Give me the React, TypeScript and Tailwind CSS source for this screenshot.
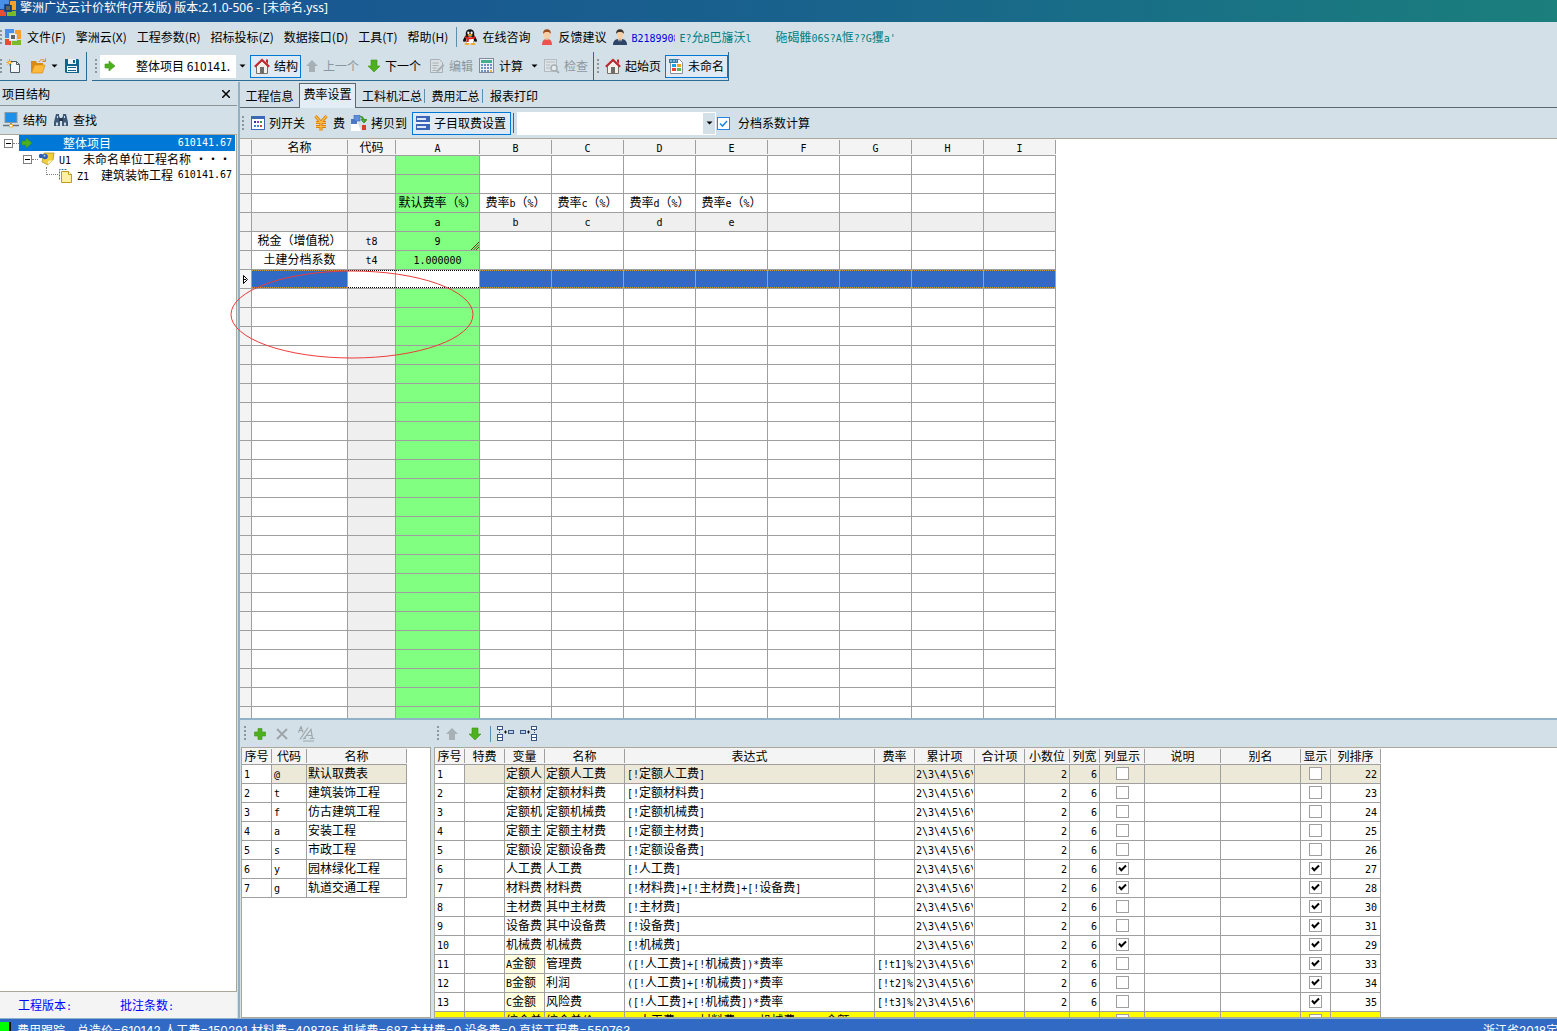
import React from 'react';

const GRID_FONT = "font-['Noto_Sans_CJK_SC',sans-serif]";

interface IRateRow {
  name?: string;
  code?: string;
  cells?: string[];
  kind?: 'keys' | 'selected';
}

interface IFeeRow {
  variable: string;
  name: string;
  expr: string;
  rate?: string;
  colShow?: boolean;
  show?: boolean;
  order: number;
  kind?: 'current' | 'amount' | 'total';
}

const menus = ['文件(F)', '擎洲云(X)', '工程参数(R)', '招标投标(Z)', '数据接口(D)', '工具(T)', '帮助(H)'];

const rateColumns = ['A', 'B', 'C', 'D', 'E', 'F', 'G', 'H', 'I'];

const rateRows: IRateRow[] = [
  {},
  {},
  { cells: ['默认费率（%）', '费率b（%）', '费率c（%）', '费率d（%）', '费率e（%）'] },
  { cells: ['a', 'b', 'c', 'd', 'e'], kind: 'keys' },
  { name: '税金（增值税）', code: 't8', cells: ['9'] },
  { name: '土建分档系数', code: 't4', cells: ['1.000000'] },
  { kind: 'selected' },
  ...Array.from({ length: 24 }, () => ({})),
];

const feeTables = [
  { code: '@', name: '默认取费表' },
  { code: 't', name: '建筑装饰工程' },
  { code: 'f', name: '仿古建筑工程' },
  { code: 'a', name: '安装工程' },
  { code: 's', name: '市政工程' },
  { code: 'y', name: '园林绿化工程' },
  { code: 'g', name: '轨道交通工程' },
];

const feeHeaders = [
  ['序号', 'w-[30px]'],
  ['特费', 'w-[40px]'],
  ['变量', 'w-[40px]'],
  ['名称', 'w-[80px]'],
  ['表达式', 'w-[250px]'],
  ['费率', 'w-[40px]'],
  ['累计项', 'w-[60px]'],
  ['合计项', 'w-[50px]'],
  ['小数位', 'w-[45px]'],
  ['列宽', 'w-[30px]'],
  ['列显示', 'w-[45px]'],
  ['说明', 'w-[76px]'],
  ['别名', 'w-[80px]'],
  ['显示', 'w-[30px]'],
  ['列排序', 'w-[50px]'],
];

const feeRows: IFeeRow[] = [
  { variable: '定额人工费', name: '定额人工费', expr: '[!定额人工费]', order: 22, kind: 'current' },
  { variable: '定额材料费', name: '定额材料费', expr: '[!定额材料费]', order: 23 },
  { variable: '定额机械费', name: '定额机械费', expr: '[!定额机械费]', order: 24 },
  { variable: '定额主材费', name: '定额主材费', expr: '[!定额主材费]', order: 25 },
  { variable: '定额设备费', name: '定额设备费', expr: '[!定额设备费]', order: 26 },
  { variable: '人工费', name: '人工费', expr: '[!人工费]', colShow: true, show: true, order: 27 },
  { variable: '材料费', name: '材料费', expr: '[!材料费]+[!主材费]+[!设备费]', colShow: true, show: true, order: 28 },
  { variable: '主材费', name: '其中主材费', expr: '[!主材费]', show: true, order: 30 },
  { variable: '设备费', name: '其中设备费', expr: '[!设备费]', show: true, order: 31 },
  { variable: '机械费', name: '机械费', expr: '[!机械费]', colShow: true, show: true, order: 29 },
  { variable: 'A金额', name: '管理费', expr: '([!人工费]+[!机械费])*费率', rate: '[!t1]%', show: true, order: 33, kind: 'amount' },
  { variable: 'B金额', name: '利润', expr: '([!人工费]+[!机械费])*费率', rate: '[!t2]%', show: true, order: 34, kind: 'amount' },
  { variable: 'C金额', name: '风险费', expr: '([!人工费]+[!机械费])*费率', rate: '[!t3]%', show: true, order: 35, kind: 'amount' },
  { variable: '综合单价', name: '综合单价', expr: '[!人工费]+[!材料费]+[!机械费]+[!A金额]+[!B金额]', show: true, order: 36, kind: 'total' },
];

// Latin runs are set in a half-width mono face so that they line up with the full-width glyphs
const Mixed = ({ children }: { children: string }) => (
  <>
    {children.split(/([\x20-\x7e]+)/).map((part, i) =>
      i % 2 === 1 ? (
        <span key={i} className="font-['DejaVu_Sans_Mono',monospace] text-[10px] leading-none whitespace-pre">{part}</span>
      ) : (
        part
      )
    )}
  </>
);

const Grip = () => (
  <svg width="3" height="15" viewBox="0 0 3 15" className="shrink-0">
    {[0, 4, 8, 12].map((y) => (
      <rect key={y} x="0" y={y} width="2" height="2" fill="#8c979d" />
    ))}
  </svg>
);

const Caret = () => (
  <svg width="7" height="4" viewBox="0 0 7 4" className="shrink-0">
    <path d="M0.5 0.5h6L3.5 3.5z" fill="#000" />
  </svg>
);

const LogoIcon = ({ dark }: { dark?: boolean }) => (
  <svg width="16" height="16" viewBox="0 0 16 16" className="shrink-0">
    <path d="M0 0h9v4H4v5H0z" fill="#4a90e8" />
    <path d="M10 1h6v9h-4V5h-2z" fill="#f9a02c" />
    <path d="M7 12h5v-1h4v5H7z" fill="#7db928" />
    <path d="M0 10h4v2h2v4H0z" fill="#ea4b35" />
    <rect x="5" y="5" width="6" height="6" fill={dark ? '#123c6e' : '#f4f4f4'} />
    <rect x="6" y="6" width="4" height="4" fill="#5d6468" />
  </svg>
);

const ArrowRight = () => (
  <svg width="12" height="12" viewBox="0 0 12 12" className="shrink-0">
    <path d="M1 4h4V1l6 5-6 5V8H1z" fill="#4fb01f" stroke="#3d9614" strokeWidth="0.6" />
  </svg>
);

const ArrowUp = () => (
  <svg width="14" height="14" viewBox="0 0 14 14" className="shrink-0">
    <path d="M7 1l6 6h-3v6H4V7H1z" fill="#a7b0b4" />
  </svg>
);

const ArrowDown = () => (
  <svg width="14" height="14" viewBox="0 0 14 14" className="shrink-0">
    <path d="M7 13L1 7h3V1h6v6h3z" fill="#4fb01f" stroke="#3d9614" strokeWidth="0.6" />
  </svg>
);

const HouseIcon = () => (
  <svg width="16" height="16" viewBox="0 0 16 16" className="shrink-0">
    <path d="M2.500 8v7.500h11V8L8 3z" fill="#f3f0ea" stroke="#77706a" />
    <rect x="6" y="9" width="4" height="6.500" fill="#6d6d6d" />
    <path d="M.8 8.800L8 1.800l7.200 7" fill="none" stroke="#c8262c" strokeWidth="2" />
    <path d="M12 1.500h2V6l-2-2z" fill="#c8262c" />
  </svg>
);

const QqIcon = () => (
  <svg width="16" height="16" viewBox="0 0 16 16" className="shrink-0">
    <ellipse cx="8" cy="9.500" rx="5.600" ry="5" fill="#111" />
    <path d="M1 12c0-2 1.500-3.500 2-4l2 3-3 2zM15 12c0-2-1.500-3.500-2-4l-2 3 3 2z" fill="#111" />
    <ellipse cx="8" cy="4.800" rx="4.300" ry="4.600" fill="#111" />
    <ellipse cx="8" cy="11.200" rx="3.800" ry="3.600" fill="#fff" />
    <ellipse cx="6.400" cy="3.800" rx="1.100" ry="1.400" fill="#fff" />
    <ellipse cx="9.600" cy="3.800" rx="1.100" ry="1.400" fill="#fff" />
    <ellipse cx="8" cy="6" rx="2.600" ry="0.900" fill="#f7a519" />
    <path d="M3 7c3 1.800 7 1.800 10 0l.4 2.200c-2 1-4.500 1.300-6.400 1l-.4 2.800H4.400l.2-3.600-2-.8z" fill="#e3211c" />
    <ellipse cx="5" cy="15" rx="2.600" ry="1" fill="#f7a519" />
    <ellipse cx="11" cy="15" rx="2.600" ry="1" fill="#f7a519" />
  </svg>
);

const PersonIcon = ({ suit }: { suit?: boolean }) => (
  <svg width="14" height="16" viewBox="0 0 14 16" className="shrink-0">
    <path d={suit ? 'M0 16c0-4 2-5.500 5-6h4c3 .5 5 2 5 6z' : 'M2 16c0-4 1.500-5.500 4-6h2c2.500.5 4 2 4 6z'} fill={suit ? '#2d4468' : '#ef5350'} />
    {suit && <path d="M5 10l2 5.500L9 10z" fill="#fff" />}
    {suit && <path d="M6.500 11h1l.5 3-1 1.500-1-1.500z" fill="#1c2c46" />}
    <rect x="5.500" y="7" width="3" height="4" fill="#e8b48c" />
    <ellipse cx="7" cy="5.500" rx={suit ? 3 : 3.6} ry="4" fill="#f7cfa6" />
    <path d="M3.200 5C2.800 1.500 5 .3 7 .3S11.200 1.500 10.800 5C10 3.500 9 3 7 3S4 3.500 3.200 5z" fill={suit ? '#3b3530' : '#9a4f1e'} />
  </svg>
);

const NewIcon = () => (
  <svg width="16" height="16" viewBox="0 0 16 16" className="shrink-0">
    <path d="M4.500 3.500h6l3 3v8h-9z" fill="#f2f6f8" stroke="#4d5b63" />
    <path d="M10.500 3.500v3h3" fill="none" stroke="#4d5b63" />
    <path d="M3.500 1v7M.5 4.500h6M1.500 2.500l4 4M5.500 2.500l-4 4" stroke="#f09a1c" />
    <circle cx="3.500" cy="4.500" r="1" fill="#fff3c4" />
  </svg>
);

const OpenIcon = () => (
  <svg width="17" height="16" viewBox="0 0 17 16" className="shrink-0">
    <path d="M1 3h5l1 2h6v3H5l-3 6H1z" fill="#d98a12" />
    <path d="M4.500 7H15l-2.500 8H1.500z" fill="#fdb93a" stroke="#d98a12" strokeWidth="0.700" />
    <path d="M9 4c1-2.500 3.500-3 5.500-1.500M15.500 .5v3h-3" fill="none" stroke="#d98a12" />
  </svg>
);

const SaveIcon = () => (
  <svg width="16" height="16" viewBox="0 0 16 16" className="shrink-0">
    <path d="M1 1h13l1 1v13H2l-1-1z" fill="#10658f" />
    <rect x="4" y="1" width="8" height="5" fill="#e9f3f8" />
    <rect x="9" y="2" width="2" height="3" fill="#10658f" />
    <rect x="3" y="8" width="10" height="6" fill="#f4f8fa" />
    <path d="M4 9.500h8M4 12.500h8" stroke="#10658f" />
  </svg>
);

const EditIcon = () => (
  <svg width="16" height="16" viewBox="0 0 16 16" className="shrink-0">
    <path d="M1.500 1.500h9l3 3v10h-12z" fill="#d9dfe2" stroke="#a7b0b4" />
    <path d="M3.500 5h6M3.500 7.500h6M3.500 10h4M3.500 12.500h4" stroke="#a7b0b4" />
    <path d="M8 12l6-6 1.500 1.500-6 6L7.500 14z" fill="#a7b0b4" />
  </svg>
);

const CalcIcon = () => (
  <svg width="16" height="16" viewBox="0 0 16 16" className="shrink-0">
    <rect x="0.500" y="0.500" width="14" height="14" fill="#eef2f6" stroke="#83899a" />
    <rect x="2" y="2" width="11" height="3" fill="#46ac8d" />
    {[6, 9, 12].map((y) =>
      [2, 5, 8, 11].map((x) => (
        <rect key={`${x}-${y}`} x={x} y={y} width="2" height="2" fill={x === 11 && y === 12 ? '#f3b73b' : '#6f8fc9'} />
      ))
    )}
  </svg>
);

const CheckDocIcon = () => (
  <svg width="16" height="16" viewBox="0 0 16 16" className="shrink-0">
    <rect x="0.500" y="1.500" width="12" height="12" fill="#dde3e6" stroke="#b3bcc1" />
    <path d="M2 4h9M2 7h4M2 10h4" stroke="#b3bcc1" />
    <circle cx="10" cy="10" r="3" fill="#e6ebed" stroke="#a7b0b4" strokeWidth="1.500" />
    <path d="M12 12l3 3" stroke="#a7b0b4" strokeWidth="2" />
  </svg>
);

const SheetIcon = () => (
  <svg width="15" height="16" viewBox="0 0 15 16" className="shrink-0">
    <path d="M1.500 1.500h9l3 3v11h-12z" fill="#fff" stroke="#8a9096" />
    <rect x="0" y="1" width="9" height="4" fill="#2f7fa8" />
    <path d="M1 3h7" stroke="#d5e8f0" strokeDasharray="2 1" />
    <rect x="3" y="6" width="4" height="3" fill="#1aa3dc" />
    <rect x="8" y="6" width="4" height="3" fill="#f7a519" />
    <rect x="3" y="10" width="4" height="3" fill="#e9443a" />
    <rect x="8" y="10" width="4" height="3" fill="#58b947" />
  </svg>
);

const MonitorIcon = () => (
  <svg width="16" height="16" viewBox="0 0 16 16" className="shrink-0">
    <rect x="2" y="0.500" width="12" height="10" fill="#1c8fe8" stroke="#8d979e" />
    <path d="M8 11v2M0 13.500h16" stroke="#6a737a" strokeWidth="1.500" />
    <rect x="6" y="12" width="4" height="3.500" fill="#f3b73b" />
    <rect x="7" y="13" width="2" height="1.500" fill="#fff" />
  </svg>
);

const BinocularsIcon = () => (
  <svg width="16" height="15" viewBox="0 0 16 15" className="shrink-0">
    <path d="M3 1h3v2l1 2v8H1V9zM10 1h3l2 8v4H9V5l1-2z" fill="#3e5878" />
    <rect x="6" y="5" width="4" height="3" fill="#26384e" />
    <path d="M3 9.500h2v3H3zM11 9.500h2v3h-2zM4 3h1v2H4zM11 3h1v2h-1z" fill="#c9d9ea" />
  </svg>
);

const ColumnsIcon = () => (
  <svg width="14" height="14" viewBox="0 0 14 14" className="shrink-0">
    <rect x="0.500" y="0.500" width="13" height="13" fill="#fff" stroke="#3d68b8" />
    <path d="M0 1.500h14" stroke="#3d68b8" strokeWidth="3" />
    <rect x="3" y="5" width="2" height="2" fill="#3a2a9c" />
    <rect x="6" y="5" width="2" height="2" fill="#a02ac8" />
    <rect x="9" y="5" width="2" height="2" fill="#2e9e3a" />
    <rect x="3" y="9" width="2" height="2" fill="#2b8ce0" />
    <rect x="6" y="9" width="2" height="2" fill="#2b8ce0" />
    <rect x="9" y="9" width="2" height="2" fill="#e03b2b" />
  </svg>
);

const YuanIcon = () => (
  <svg width="16" height="16" viewBox="0 0 16 16" className="shrink-0">
    <path d="M2.500 1L8 7.500 13.500 1M8 7v8.500M3 7.500h10M3 11.500h10" fill="none" stroke="#d9820e" strokeWidth="3.200" />
    <path d="M2.500 1L8 7.500 13.500 1M8 7v8.500M3 7.500h10M3 11.500h10" fill="none" stroke="#fbbf4a" strokeWidth="1.200" />
  </svg>
);

const CopyToIcon = () => (
  <svg width="16" height="16" viewBox="0 0 16 16" className="shrink-0">
    <path d="M0 6h6l4 10H0z" fill="#fff" />
    <rect x="0" y="4" width="6" height="5" fill="#4b79c4" />
    <rect x="3" y="0" width="6" height="6" fill="#5f8fdc" stroke="#3d68b8" strokeWidth="0.600" />
    <path d="M9 1.500c3 0 4 1 4 5M10 4.500l3 3.500 3-3.500z" fill="#3f9a2a" stroke="#3f9a2a" />
    <rect x="11" y="10" width="4" height="5" fill="#d6402b" />
  </svg>
);

const ServerIcon = () => (
  <svg width="14" height="15" viewBox="0 0 14 15" className="shrink-0">
    <rect x="0" y="0" width="14" height="6" fill="#3a66b5" />
    <rect x="0" y="8" width="14" height="6" fill="#3a66b5" />
    <path d="M1 3h9M1 11h9" stroke="#dbe6f6" strokeWidth="2" />
    <path d="M0 7h14" stroke="#fff" />
  </svg>
);

const NoteIcon = () => (
  <svg width="17" height="14" viewBox="0 0 17 14" className="shrink-0">
    <path d="M6 1h10l-1 7-5 5-6-3z" fill="#f0cf3c" stroke="#a8861a" strokeWidth="0.700" />
    <path d="M15 8l-5 5v-4z" fill="#fff3b0" />
    <circle cx="3" cy="4" r="2.200" fill="#2f5fb0" />
    <circle cx="7" cy="4.500" r="2.800" fill="#2f5fb0" />
    <circle cx="6.500" cy="3.800" r="1" fill="#a9c8f3" />
  </svg>
);

const PagesIcon = () => (
  <svg width="15" height="15" viewBox="0 0 15 15" className="shrink-0">
    <path d="M1.500 11.500v-10h7" fill="none" stroke="#3a6ea5" strokeDasharray="2 1" />
    <path d="M3.500 3.500h7l3 3v8h-10z" fill="#fdf0a4" stroke="#c39a1e" />
    <path d="M10.500 3.500v3h3" fill="#fff" stroke="#c39a1e" />
  </svg>
);

const PlusIcon = () => (
  <svg width="12" height="12" viewBox="0 0 12 12" className="shrink-0">
    <path d="M4 0.500h4V4h3.500v4H8v3.500H4V8H.5V4H4z" fill="#4fb01f" stroke="#3d9614" strokeWidth="0.600" />
  </svg>
);

const CrossIcon = () => (
  <svg width="12" height="12" viewBox="0 0 12 12" className="shrink-0">
    <path d="M1 1l10 10M11 1L1 11" stroke="#9ea6aa" strokeWidth="2" />
  </svg>
);

const RenameIcon = () => (
  <svg width="17" height="16" viewBox="0 0 17 16" className="shrink-0">
    <path d="M.5 6.500L3 .5l2 6M1.500 4.500h3M2 13.500L10 1.500M6 12.500l7-9 1.500 9M9 9.500h5M5 12.500h3M12 12.500h4.500M5 15h11" fill="none" stroke="#9ea6aa" strokeWidth="1.200" />
  </svg>
);

const LevelIcon = ({ flip }: { flip?: boolean }) => (
  <svg width="17" height="15" viewBox="0 0 17 15" className={flip ? 'shrink-0 -scale-x-100' : 'shrink-0'}>
    {[0.5, 8.5, 11.5].map((y) => (
      <rect key={y} x="0.500" y={y} width="5" height="3" fill="#fff" stroke="#3a5480" />
    ))}
    <path d="M2.500 4v4" stroke="#3a5480" strokeDasharray="1 1" />
    <path d="M7 6h3M8.500 4.500v3" stroke="#111" />
    <rect x="11.500" y="4.500" width="5" height="3" fill="#b8d0f0" stroke="#3a5480" />
  </svg>
);

interface IToolButton {
  icon: React.ReactNode;
  label: string;
  active?: boolean;
  disabled?: boolean;
  caret?: boolean;
  className?: string;
}

const ToolButton = ({ icon, label, active, disabled, caret, className = '' }: IToolButton) => (
  <button
    type="button"
    disabled={disabled}
    className={`flex h-[23px] shrink-0 items-center gap-1 whitespace-nowrap border ${active ? 'border-[#0078d7] bg-[#dfeaf4] px-[3px]' : 'border-transparent'} ${disabled ? 'text-[#8b979e]' : ''} ${className}`}>
    {icon}
    {label}
    {caret && <span className="ml-1"><Caret /></span>}
  </button>
);

const HeadCell = ({ children, width }: { children?: string; width: string }) => (
  <th className={`h-[17px] border-b border-[#9f9f9f] bg-[#f4f4f4] p-0 font-normal ${width}`}>
    <div className="h-[14px] border-r border-[#9f9f9f] text-center leading-[14px] whitespace-nowrap">
      {children && <Mixed>{children}</Mixed>}
    </div>
  </th>
);

const Cell = ({ children, className = '' }: { children?: React.ReactNode; className?: string }) => (
  <td className={`h-[19px] overflow-hidden border-r border-b border-[#9f9f9f] p-0 align-top leading-4 whitespace-nowrap ${className}`}>
    {children}
  </td>
);

const GridCheck = ({ label, checked }: { label: string; checked?: boolean }) => (
  <span className="relative mx-auto mt-[2px] block size-[13px]">
    <input type="checkbox" aria-label={label} defaultChecked={checked} className="peer block size-[13px] appearance-none border border-[#9f9f9f] bg-white" />
    <svg viewBox="0 0 13 13" className="pointer-events-none absolute inset-0 hidden peer-checked:block">
      <path d="M3 5.500l2.300 2.800L10 3.500" fill="none" stroke="#000" strokeWidth="2" />
    </svg>
  </span>
);

const Expander = () => (
  <button type="button" aria-label="折叠" className="flex size-[9px] shrink-0 items-center justify-center border border-[#808080] bg-white">
    <span className="h-px w-[5px] bg-black" />
  </button>
);

const RateGrid = () => (
  <table className={`w-[816px] table-fixed border-separate border-spacing-0 text-[12px] ${GRID_FONT}`}>
    <thead>
      <tr>
        <HeadCell width="w-[12px]" />
        <HeadCell width="w-[96px]">名称</HeadCell>
        <HeadCell width="w-[48px]">代码</HeadCell>
        {rateColumns.map((col) => (
          <HeadCell key={col} width={col === 'A' ? 'w-[84px]' : 'w-[72px]'}>{col}</HeadCell>
        ))}
      </tr>
    </thead>
    <tbody className="text-center">
      {rateRows.map((row, i) => {
        if (row.kind === 'selected') {
          return (
            <tr key={i}>
              <Cell className="bg-[#f4f4f4]">
                <svg width="7" height="9" viewBox="0 0 7 9" className="mx-auto mt-[5px]">
                  <path d="M1.500 0.500v8L5.500 4.500zM1 4.500h3" fill="#fff" stroke="#000" />
                </svg>
              </Cell>
              {['名称', '代码', ...rateColumns].map((col) => {
                const open = col === '代码' || col === 'A';
                return (
                  <Cell key={col} className={open ? 'bg-white' : 'bg-[#316ac5]'}>
                    <div className={`h-[18px] border-y border-dotted ${open ? 'border-black' : 'border-[#ce953a]'}`} />
                  </Cell>
                );
              })}
            </tr>
          );
        }
        const keys = row.kind === 'keys';
        return (
          <tr key={i}>
            <Cell className="bg-[#f4f4f4]" />
            <Cell className={keys ? 'bg-[#efefef]' : ''}>{row.name && <Mixed>{row.name}</Mixed>}</Cell>
            <Cell className="bg-[#efefef]">{row.code && <Mixed>{row.code}</Mixed>}</Cell>
            {rateColumns.map((col, c) => {
              const text = row.cells?.[c];
              return (
                <Cell key={col} className={c === 0 ? 'relative bg-[#80ff80]' : keys ? 'bg-[#efefef]' : ''}>
                  {text && <Mixed>{text}</Mixed>}
                  {text === '9' && (
                    <svg width="8" height="8" viewBox="0 0 8 8" className="absolute right-0 bottom-0">
                      <path d="M0 8l8-8M2.500 8L8 2.500M5 8l3-3" stroke="#5a3a10" />
                    </svg>
                  )}
                </Cell>
              );
            })}
          </tr>
        );
      })}
    </tbody>
  </table>
);

const FeeTableList = () => (
  <table className={`w-[165px] table-fixed border-separate border-spacing-0 text-[12px] ${GRID_FONT}`}>
    <thead>
      <tr>
        <HeadCell width="w-[30px]">序号</HeadCell>
        <HeadCell width="w-[35px]">代码</HeadCell>
        <HeadCell width="w-[100px]">名称</HeadCell>
      </tr>
    </thead>
    <tbody>
      {feeTables.map((row, i) => (
        <tr key={row.code}>
          <Cell className="pl-[2px]"><Mixed>{String(i + 1)}</Mixed></Cell>
          <Cell className={i === 0 ? 'bg-[#ece9d8] pl-[2px]' : 'pl-[2px]'}><Mixed>{row.code}</Mixed></Cell>
          <Cell className={i === 0 ? 'bg-[#ece9d8] pl-px' : 'pl-px'}>{row.name}</Cell>
        </tr>
      ))}
    </tbody>
  </table>
);

const FeeItems = () => (
  <table className={`w-[946px] table-fixed border-separate border-spacing-0 text-[12px] ${GRID_FONT}`}>
    <thead>
      <tr>
        {feeHeaders.map(([label, width]) => (
          <HeadCell key={label} width={width}>{label}</HeadCell>
        ))}
      </tr>
    </thead>
    <tbody>
      {feeRows.map((row, i) => {
        const bg = row.kind === 'current' ? 'bg-[#ece9d8]' : row.kind === 'total' ? 'bg-[#ffff00]' : '';
        return (
          <tr key={row.order}>
            <Cell className={`pl-[2px] ${row.kind === 'total' ? bg : ''}`}><Mixed>{String(i + 1)}</Mixed></Cell>
            <Cell className={bg} />
            <Cell className={`pl-px ${row.kind === 'amount' ? 'bg-[#ffffe1]' : bg}`}>
              <div className="w-[36px] overflow-hidden"><Mixed>{row.variable}</Mixed></div>
            </Cell>
            <Cell className={`pl-px ${bg}`}><Mixed>{row.name}</Mixed></Cell>
            <Cell className={`pl-[2px] ${bg}`}><Mixed>{row.expr}</Mixed></Cell>
            <Cell className={`pl-[2px] ${bg}`}>{row.rate && <Mixed>{row.rate}</Mixed>}</Cell>
            <Cell className={`pl-px ${bg}`}>
              <div className="w-[57px] overflow-hidden"><Mixed>{'2\\3\\4\\5\\6\\7'}</Mixed></div>
            </Cell>
            <Cell className={bg} />
            <Cell className={`pr-[2px] text-right ${bg}`}><Mixed>2</Mixed></Cell>
            <Cell className={`pr-[2px] text-right ${bg}`}><Mixed>6</Mixed></Cell>
            <Cell className={bg}><GridCheck label={`${row.name} 列显示`} checked={row.colShow} /></Cell>
            <Cell className={bg} />
            <Cell className={bg} />
            <Cell className={bg}><GridCheck label={`${row.name} 显示`} checked={row.show} /></Cell>
            <Cell className={`pr-[3px] text-right ${bg}`}><Mixed>{String(row.order)}</Mixed></Cell>
          </tr>
        );
      })}
    </tbody>
  </table>
);

const TopBars = () => (
  <header>
    <div className="flex h-[22px] items-start gap-1 overflow-hidden bg-linear-to-r from-[#1a5294] via-[#19618d] to-[#1b7f7c] font-['Noto_Sans','Noto_Sans_CJK_SC',sans-serif] leading-4 text-white">
      <LogoIcon dark />
      <h1>擎洲广达云计价软件(开发版) 版本:2.1.0-506 - [未命名.yss]</h1>
    </div>

    <nav className="flex h-[30px] items-center">
      <Grip />
      <span className="ml-[2px] mr-1.5"><LogoIcon /></span>
      <div className="flex gap-2.5">
        {menus.map((menu) => (
          <button key={menu} type="button" className="whitespace-nowrap">{menu}</button>
        ))}
      </div>
      <div className="ml-2 h-5 w-px bg-[#5b8fb0]" />
      <ToolButton icon={<QqIcon />} label="在线咨询" className="ml-1" />
      <ToolButton icon={<PersonIcon />} label="反馈建议" className="ml-2" />
      <span className="ml-1.5"><PersonIcon suit /></span>
      <span className="ml-1 w-[44px] overflow-hidden whitespace-nowrap text-[#0000e0]"><Mixed>B2189908</Mixed></span>
      <span className="ml-1 whitespace-nowrap text-[#008080]"><Mixed>E?允B巴旛沃l</Mixed></span>
      <span className="ml-6 whitespace-nowrap text-[#008080]"><Mixed>砤碣雔06S?A恇??G玃a'</Mixed></span>
    </nav>

    <div className="flex h-[29px] items-stretch">
      <div className="flex w-[87px] items-center border-r border-b border-[#2a6c95]">
        <Grip />
        <button type="button" aria-label="新建" className="ml-[3px]"><NewIcon /></button>
        <button type="button" aria-label="打开" className="ml-2 flex items-center gap-1"><OpenIcon /><Caret /></button>
        <button type="button" aria-label="保存" className="ml-1.5"><SaveIcon /></button>
      </div>
      <div className="ml-[5px] flex w-[502px] items-center border-r border-b border-[#2a6c95]">
        <span className="ml-[3px]"><Grip /></span>
        <div className="ml-[2px] flex h-[23px] w-[149px] shrink-0 items-center bg-white">
          <span className="ml-1"><ArrowRight /></span>
          <select aria-label="当前工程" className="ml-5 h-full w-[94px] appearance-none overflow-hidden whitespace-nowrap bg-white">
            <option>整体项目 610141.67</option>
          </select>
          <span className="ml-auto flex h-full w-[13px] items-center justify-center bg-[#d3e0e8]"><Caret /></span>
        </div>
        <ToolButton icon={<HouseIcon />} label="结构" active className="ml-px w-[51px]" />
        <ToolButton icon={<ArrowUp />} label="上一个" disabled className="ml-[3px]" />
        <ToolButton icon={<ArrowDown />} label="下一个" className="ml-1.5" />
        <ToolButton icon={<EditIcon />} label="编辑" disabled className="ml-1.5" />
        <ToolButton icon={<CalcIcon />} label="计算" caret className="ml-1" />
        <ToolButton icon={<CheckDocIcon />} label="检查" disabled className="ml-1" />
      </div>
      <div className="flex w-[135px] items-center border-r border-b border-[#2a6c95]">
        <span className="ml-[3px]"><Grip /></span>
        <ToolButton icon={<HouseIcon />} label="起始页" className="ml-1" />
        <ToolButton icon={<SheetIcon />} label="未命名" active className="ml-[3px] w-[63px]" />
      </div>
    </div>
  </header>
);

const ProjectPanel = () => (
  <aside className="flex w-[237px] shrink-0 flex-col">
    <div className="flex h-6 items-center justify-between border-b border-[#8c9498] pl-[2px] pr-[7px]">
      <h2>项目结构</h2>
      <button type="button" aria-label="关闭">
        <svg width="8" height="8" viewBox="0 0 8 8"><path d="M0 0l8 8M8 0L0 8" stroke="#000" strokeWidth="1.500" /></svg>
      </button>
    </div>
    <div className="flex h-[28px] items-center gap-1 pl-[2px]">
      <ToolButton icon={<MonitorIcon />} label="结构" />
      <ToolButton icon={<BinocularsIcon />} label="查找" />
    </div>
    <div className="min-h-0 flex-1 border-t border-r border-b border-[#aca899] bg-white">
      <ul className={`leading-4 ${GRID_FONT}`}>
        <li className="flex h-4 items-center pl-1 pr-px">
          <Expander />
          <span className="w-[6px] border-t border-dotted border-[#808080]" />
          <span className="flex h-4 flex-1 items-center bg-[#0078d7] pl-[2px] pr-[3px] text-white">
            <ArrowRight />
            <span className="ml-[30px] flex-1">整体项目</span>
            <Mixed>610141.67</Mixed>
          </span>
        </li>
        <li className="flex h-4 items-center pl-[23px]">
          <Expander />
          <span className="w-[6px] border-t border-dotted border-[#808080]" />
          <NoteIcon />
          <span className="ml-1 w-6"><Mixed>U1</Mixed></span>
          <span className="whitespace-nowrap"><Mixed>未命名单位工程名称</Mixed></span>
          <span className="ml-1 whitespace-nowrap"><Mixed>···</Mixed></span>
        </li>
        <li className="flex h-4 items-center pl-[46px] pr-1">
          <span className="h-4 w-3 shrink-0">
            <span className="block h-2 border-b border-l border-dotted border-[#808080]" />
          </span>
          <PagesIcon />
          <span className="ml-1 w-6"><Mixed>Z1</Mixed></span>
          <span className="flex-1 whitespace-nowrap">建筑装饰工程</span>
          <Mixed>610141.67</Mixed>
        </li>
      </ul>
    </div>
    <div className={`flex h-[26px] items-center gap-[48px] bg-[#f4f4f4] pl-[18px] text-[#0000ff] ${GRID_FONT}`}>
      <span><Mixed>工程版本:</Mixed></span>
      <span><Mixed>批注条数:</Mixed></span>
    </div>
  </aside>
);

const Workspace = () => (
  <main className="flex min-w-0 flex-1 flex-col border-l-2 border-[#8fb2c6]">
    <div className="flex h-[26px] shrink-0 items-end border-b border-[#5f676b]">
      <button type="button" className="h-[22px] w-[59px] whitespace-nowrap">工程信息</button>
      <button type="button" className="-mb-px h-[25px] w-[57px] border border-b-0 border-[#5f676b] bg-[#e3edf6] pb-1 whitespace-nowrap">费率设置</button>
      <button type="button" className="h-[22px] w-[68px] pl-1 whitespace-nowrap">工料机汇总</button>
      <span className="mb-1 h-[14px] w-px bg-[#5b8fb0]" />
      <button type="button" className="h-[22px] w-[57px] pl-1 whitespace-nowrap">费用汇总</button>
      <span className="mb-1 h-[14px] w-px bg-[#5b8fb0]" />
      <button type="button" className="h-[22px] w-[62px] whitespace-nowrap">报表打印</button>
    </div>

    <div className="flex h-[30px] shrink-0 items-center pl-[2px]">
      <Grip />
      <ToolButton icon={<ColumnsIcon />} label="列开关" className="ml-[5px]" />
      <ToolButton icon={<YuanIcon />} label="费" className="ml-1.5" />
      <ToolButton icon={<CopyToIcon />} label="拷贝到" className="ml-1" />
      <ToolButton icon={<ServerIcon />} label="子目取费设置" active className="ml-1 w-[99px]" />
      <div className="ml-[2px] h-5 w-px bg-[#2a6c95]" />
      <div className="ml-[3px] flex h-[23px] w-[199px] items-center bg-white">
        <input type="text" aria-label="取费设置" className="h-full min-w-0 flex-1 bg-white outline-none" />
        <button type="button" aria-label="展开" className="mr-px flex h-[21px] w-3 items-center justify-center bg-[#d3e0e8]"><Caret /></button>
      </div>
      <label className="ml-px flex items-center gap-2">
        <span className="relative block size-[13px]">
          <input type="checkbox" defaultChecked className="peer block size-[13px] appearance-none border border-[#2585e8] bg-white" />
          <svg viewBox="0 0 13 13" className="pointer-events-none absolute inset-0 hidden peer-checked:block">
            <path d="M3 6.500l2.500 2.500L10 4" fill="none" stroke="#2585e8" strokeWidth="1.600" />
          </svg>
        </span>
        分档系数计算
      </label>
    </div>

    <div className="relative min-h-0 flex-1 border-t border-[#aca899] bg-white">
      <div className="h-full overflow-hidden">
        <RateGrid />
      </div>
      <svg width="244" height="89" viewBox="0 0 244 89" className="pointer-events-none absolute top-[131px] -left-[10px]">
        <ellipse cx="122" cy="44.500" rx="121" ry="43.500" fill="none" stroke="#ee3b3b" />
      </svg>
    </div>

    <div className="flex h-[300px] shrink-0 border-t-2 border-[#8fb2c6]">
      <section className="flex w-[191px] shrink-0 flex-col">
        <div className="flex h-[27px] items-center pl-1">
          <Grip />
          <button type="button" aria-label="添加" className="ml-[7px]"><PlusIcon /></button>
          <button type="button" aria-label="删除" disabled className="ml-2.5"><CrossIcon /></button>
          <button type="button" aria-label="重命名" disabled className="ml-2.5"><RenameIcon /></button>
        </div>
        <div className="ml-px min-h-0 flex-1 overflow-hidden border border-[#aca899] bg-white">
          <FeeTableList />
        </div>
      </section>
      <section className="ml-[3px] flex min-w-0 flex-1 flex-col">
        <div className="flex h-[27px] items-center pl-[3px]">
          <Grip />
          <button type="button" aria-label="上移" disabled className="ml-[5px]"><ArrowUp /></button>
          <button type="button" aria-label="下移" className="ml-[9px]"><ArrowDown /></button>
          <div className="ml-2 h-4 w-px bg-[#5b8fb0]" />
          <button type="button" aria-label="降级" className="ml-1.5"><LevelIcon /></button>
          <button type="button" aria-label="升级" className="ml-1.5"><LevelIcon flip /></button>
        </div>
        <div className="min-h-0 flex-1 overflow-hidden border border-r-0 border-[#aca899] bg-white">
          <FeeItems />
        </div>
      </section>
    </div>
  </main>
);

const App = () => {
  return (
    <div className="flex h-screen flex-col overflow-hidden bg-[#d3e0e8] font-['Noto_Sans_CJK_SC',sans-serif] text-[12px] leading-4 text-black">
      <TopBars />
      <div className="mt-px flex min-h-0 flex-1">
        <ProjectPanel />
        <div className="w-px bg-[#d3e0e8]" />
        <Workspace />
      </div>
      <footer className="flex h-[13px] shrink-0 items-start overflow-hidden border-t border-[#8fb2c6] bg-[#316ac5] font-['Inter','Noto_Sans_CJK_SC',sans-serif] text-white">
        <span className="mt-[3px] h-3 w-[11px] shrink-0 border-r-2 border-r-black bg-[#00ff00]" />
        <span className="mt-1 ml-1.5 flex-1 whitespace-nowrap">费用跟踪　总造价=610142,人工费=150291,材料费=408785,机械费=687,主材费=0,设备费=0,直接工程费=550763</span>
        <span className="mt-1 w-[74px] overflow-hidden whitespace-nowrap">浙江省2018定额</span>
      </footer>
    </div>
  );
};

export default App;
